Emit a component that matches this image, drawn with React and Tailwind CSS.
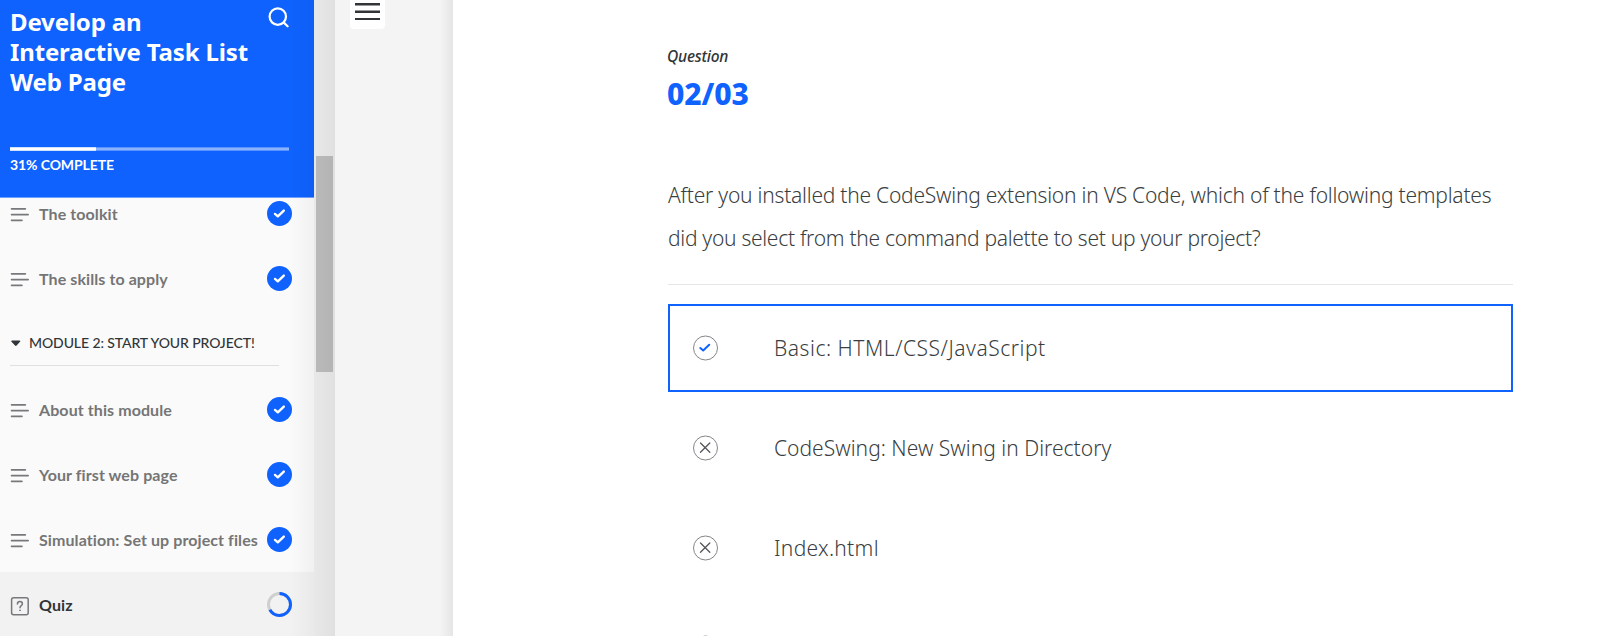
const plex = "font-['Noto_Sans','Open_Sans',sans-serif]";
const lato = "font-['Lato',sans-serif]";

function LessonIcon() {
  return (
    <svg width="20" height="16" viewBox="0 0 20 16" fill="none" stroke="#77787c" strokeWidth="1.8" strokeLinecap="round" className="shrink-0">
      <path d="M2.6 2.8H16.3M2.6 8.6H19.1M2.6 14.3H12.9" />
    </svg>
  );
}

function QuizIcon() {
  return (
    <svg width="20" height="20" viewBox="0 0 20 20" fill="none" stroke="#77787c" strokeWidth="1.5" strokeLinecap="round" className="shrink-0">
      <rect x="2.6" y="1.8" width="16.6" height="17" rx="2" />
      <path d="M8.4 7.9C8.4 6.4 9.5 5.6 10.9 5.6C12.3 5.6 13.4 6.5 13.4 7.9C13.4 9.5 11 9.7 11 11.7" />
      <circle cx="11" cy="14.3" r="0.5" fill="#77787c" strokeWidth="0.8" />
    </svg>
  );
}

function DoneBadge() {
  return (
    <svg width="25" height="25" viewBox="0 0 25 25" className="block shrink-0">
      <circle cx="12.5" cy="12.5" r="12.5" fill="#0f62fe" />
      <path d="M8 12.9L10.8 15.3L16.8 9.6" fill="none" stroke="#fff" strokeWidth="2.4" strokeLinecap="round" strokeLinejoin="round" />
    </svg>
  );
}

function ProgressRing() {
  return (
    <svg width="25" height="25" viewBox="0 0 25 25" fill="none" strokeWidth="3" className="block shrink-0">
      <circle cx="12.5" cy="12.5" r="11" stroke="#cfcfcf" />
      <circle cx="12.5" cy="12.5" r="11" stroke="#0f62fe" pathLength="100" strokeDasharray="67 33" transform="rotate(-90 12.5 12.5)" />
    </svg>
  );
}

function Lesson({ title }) {
  return (
    <li className="flex h-[65px] items-center pl-[9px] pr-[22px]">
      <LessonIcon />
      <span className={`${lato} ml-[10px] flex-1 whitespace-nowrap text-[16px] font-bold leading-5 tracking-[0.09px] text-[#757575]`}>{title}</span>
      <DoneBadge />
    </li>
  );
}

function Option({ label, selected, spacing }) {
  return (
    <li className={`flex h-[88px] w-[845px] items-center border-2 pl-[23px] ${selected ? 'border-[#0f62fe]' : 'border-transparent'}`}>
      <svg width="26" height="26" viewBox="0 0 26 26" fill="none" className="shrink-0">
        <circle cx="12.5" cy="13" r="12" stroke="#86868a" strokeWidth="1" />
        {selected ? (
          <path d="M7.3 13L10.2 15.4L16.2 9.8" stroke="#0f62fe" strokeWidth="2" strokeLinecap="round" strokeLinejoin="round" />
        ) : (
          <path d="M7.5 8L16.8 17.3M16.8 8L7.5 17.3" stroke="#54565b" strokeWidth="1.3" strokeLinecap="round" />
        )}
      </svg>
      <span className={`${plex} ${spacing} ml-[55px] text-[21px] font-light leading-[30px] text-[#3a3e41]`}>{label}</span>
    </li>
  );
}

export default function App() {
  return (
    <div className="flex h-[636px] w-[1608px] overflow-hidden bg-[#f4f4f4]">
      <aside className="relative flex w-[335px] shrink-0 bg-[#f1f1f1]">
        <div className="flex w-[314px] flex-col overflow-hidden bg-[#fafafa]">
          <header className="relative flex h-[198px] shrink-0 flex-col border-b border-[#6fa0fe] bg-[#0f62fe] pl-[10px] pr-[25px] text-white">
            <div className="flex justify-between pt-[7px]">
              <h1 className={`${plex} w-[250px] text-[24px] font-bold leading-[30px] tracking-[-0.15px]`}>
                Develop an<br />Interactive Task List<br />Web Page
              </h1>
              <svg width="21" height="21" viewBox="0 0 21 21" fill="none" stroke="#fff" strokeWidth="2.2" strokeLinecap="round">
                <circle cx="9.8" cy="9.6" r="8.2" />
                <path d="M15.8 15.6L19.6 19.3" />
              </svg>
            </div>
            <div className="mt-[50px] h-1 shrink-0 border-y border-[#5b93fe] bg-[#8bb2fe]">
              <div className="-mt-px h-1 w-[86px] border-y border-[#cfe0ff] bg-white" />
            </div>
            <p className={`${lato} mt-[4px] text-[14px] font-bold leading-5 tracking-[-0.1px]`}>31% COMPLETE</p>
          </header>
          <ul className="-mt-[17px] shrink-0">
            <Lesson title="The toolkit" />
            <Lesson title="The skills to apply" />
          </ul>
          <div className="mb-[11px] ml-[10px] flex h-[55px] w-[269px] shrink-0 items-center border-b border-[#e0e0e0] pt-[10px]">
            <svg width="12" height="8" viewBox="0 0 12 8" fill="#313537">
              <path d="M2 1.4H9.5Q11 1.6 10 2.8L6.6 6.6Q5.8 7.4 5 6.6L1.5 2.8Q.5 1.6 2 1.4Z" />
            </svg>
            <span className={`${lato} ml-[7px] whitespace-nowrap text-[14px] font-medium leading-5 tracking-[-0.1px] text-[#313537]`}>MODULE 2: START YOUR PROJECT!</span>
          </div>
          <ul className="shrink-0">
            <Lesson title="About this module" />
            <Lesson title="Your first web page" />
            <Lesson title="Simulation: Set up project files" />
            <li className="flex h-[65px] items-center bg-[#f2f2f2] pl-[9px] pr-[22px]">
              <span className="pt-[2px]"><QuizIcon /></span>
              <span className={`${lato} ml-[10px] flex-1 text-[16px] font-bold leading-5 tracking-[0.09px] text-[#313537]`}>Quiz</span>
              <ProgressRing />
            </li>
          </ul>
        </div>
        <div className="w-[21px] pl-[2px] pt-[156px]">
          <div className="h-[216px] w-[17px] bg-[#c1c1c1]" />
        </div>
        <div className="pointer-events-none absolute inset-y-0 right-0 w-[45px] bg-gradient-to-r from-black/0 to-black/[0.07]" />
      </aside>

      <div className="flex w-[118px] shrink-0 justify-between">
        <div className="ml-[15px] flex h-[29px] w-[35px] flex-col items-center rounded-b bg-white pt-[3px]">
          <span className="h-[3px] w-[25px] border-b border-[#98999b] bg-[#313537]" />
          <span className="mt-1 h-[3px] w-[25px] border-t border-[#98999b] bg-[#313537]" />
          <span className="mt-[5px] h-[2px] w-[25px] bg-[#313537]" />
        </div>
        <div className="w-[13px] bg-gradient-to-r from-black/0 to-black/[0.06]" />
      </div>

      <main className="flex-1 bg-white pl-[215px]">
        <p className={`${plex} -ml-px pt-[46px] text-[15.5px] font-medium italic leading-5 tracking-[-0.2px] text-[#313537]`}>Question</p>
        <p className={`${plex} -ml-px mt-[8px] text-[30px] font-extrabold leading-10 tracking-[-0.1px] text-[#0f62fe]`}>02/03</p>
        <div className={`${plex} mt-[60px] w-[845px] whitespace-nowrap border-b border-[#e5e5e5] pb-[24px] text-[21px] font-light leading-[43px] text-[#3a3e41]`}>
          <p className="tracking-[-0.235px]">After you installed the CodeSwing extension in VS Code, which of the following templates</p>
          <p className="tracking-[-0.29px]">did you select from the command palette to set up your project?</p>
        </div>
        <ul className="mt-[19px] flex flex-col gap-3">
          <Option label="Basic: HTML/CSS/JavaScript" spacing="tracking-[0.53px]" selected />
          <Option label="CodeSwing: New Swing in Directory" spacing="tracking-[0.02px]" />
          <Option label="Index.html" spacing="tracking-[0.3px]" />
          <Option label="" spacing="tracking-normal" />
        </ul>
      </main>
    </div>
  );
}
